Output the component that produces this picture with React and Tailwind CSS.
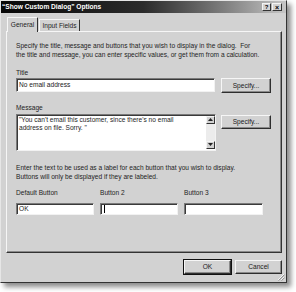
import React from "react";

function Btn({ children, w = "w-[50px]", h = "h-[15px]", def = false, extra = "" }) {
  return (
    <div
      className={`${w} ${h} ${extra} flex items-center justify-center bg-[#d2d2d2] ${
        def ? "outline outline-1 outline-[#111]" : ""
      } border border-t-[#f6f6f6] border-l-[#f6f6f6] border-r-[#2e2e2e] border-b-[#2e2e2e] shadow-[inset_-1px_-1px_0_#8a8a8a] text-[#1a1a1a]`}
    >
      {children}
    </div>
  );
}

function Field({ w, h, children, extra = "" }) {
  return (
    <div
      className={`${w} ${h} ${extra} bg-white border border-t-[#7a7a7a] border-l-[#7a7a7a] border-r-[#f2f2f2] border-b-[#f2f2f2] shadow-[inset_1px_1px_0_#3a3a3a] flex items-center pl-[2px] text-[#1a1a1a]`}
    >
      {children}
    </div>
  );
}

export default function App() {
  return (
    <div className="w-[296px] h-[292px] bg-white overflow-hidden font-['Liberation_Sans',Arial,sans-serif] text-[6.6px] text-[#1e1e1e]">
      <div className="relative w-[287px] h-[283px] bg-[#d2d2d2] border border-t-[#e6e6e6] border-l-[#e6e6e6] border-r-[#333] border-b-[#333] shadow-[4px_4px_5px_rgba(0,0,0,0.45)] flex flex-col">
        {/* title bar */}
        <div className="h-[12px] flex items-center justify-between bg-linear-to-r from-[#080808] via-[#2c2c2c] to-[#c6c6c6] pl-[1px] pr-[4px]">
          <span className="text-white font-bold leading-none">“Show Custom Dialog” Options</span>
          <div className="flex">
            <div className="w-[9px] h-[8px] bg-[#d2d2d2] border border-t-[#f4f4f4] border-l-[#f4f4f4] border-r-[#333] border-b-[#333] flex items-center justify-center text-[6px] font-bold leading-none text-black">?</div>
            <div className="w-[10px] h-[8px] ml-px bg-[#d2d2d2] border border-t-[#f4f4f4] border-l-[#f4f4f4] border-r-[#333] border-b-[#333] flex items-center justify-center text-[7px] font-bold leading-none text-black">×</div>
          </div>
        </div>

        {/* tabs */}
        <div className="mt-[4px] ml-[6px] h-[14px] flex items-end relative z-10">
          <div className="w-[31px] h-[14px] bg-[#d2d2d2] border border-b-0 border-t-[#f6f6f6] border-l-[#f6f6f6] border-r-[#333] rounded-t-[1px] flex items-center justify-center pb-[1px] mb-[-1px] h-[15px]">
            General
          </div>
          <div className="w-[41px] h-[12px] ml-[1px] bg-[#d2d2d2] border border-b-0 border-t-[#f6f6f6] border-l-[#f6f6f6] border-r-[#333] flex items-center justify-center">
            Input Fields
          </div>
        </div>

        {/* panel */}
        <div className="ml-[5px] w-[276px] h-[222px] border border-t-[#f6f6f6] border-l-[#f6f6f6] border-r-[#333] border-b-[#333] shadow-[inset_-1px_-1px_0_#8a8a8a] pl-[9px] pt-[9px] flex flex-col">
          <p className="leading-[9px]">
            Specify the title, message and buttons that you wish to display in the dialog.&nbsp; For
            <br />
            the title and message, you can enter specific values, or get them from a calculation.
          </p>

          <div className="mt-[8.5px] leading-[9px]">Title</div>
          <div className="mt-[1.5px] flex items-start">
            <Field w="w-[199px]" h="h-[14px]">No email address</Field>
            <Btn extra="ml-[6px]">Specify...</Btn>
          </div>

          <div className="mt-[10px] leading-[9px]">Message</div>
          <div className="mt-[1.5px] flex items-start">
            <div className="w-[200px] h-[37px] bg-white border border-t-[#7a7a7a] border-l-[#7a7a7a] border-r-[#f2f2f2] border-b-[#f2f2f2] shadow-[inset_1px_1px_0_#3a3a3a] flex">
              <div className="flex-1 pl-[2px] pt-[1px] leading-[8.5px]">
                "You can't email this customer, since there's no email
                <br />
                address on file. Sorry. "
              </div>
              <div className="w-[9px] mt-px mb-px bg-[#ececec] flex flex-col justify-between">
                <div className="h-[8px] bg-[#d2d2d2] border border-t-[#f4f4f4] border-l-[#f4f4f4] border-r-[#333] border-b-[#333] flex items-center justify-center">
                  <svg width="5" height="3" viewBox="0 0 5 3"><path d="M2.5 0 L5 3 L0 3 Z" fill="#222" /></svg>
                </div>
                <div className="h-[8px] bg-[#d2d2d2] border border-t-[#f4f4f4] border-l-[#f4f4f4] border-r-[#333] border-b-[#333] flex items-center justify-center">
                  <svg width="5" height="3" viewBox="0 0 5 3"><path d="M0 0 L5 0 L2.5 3 Z" fill="#222" /></svg>
                </div>
              </div>
            </div>
            <Btn extra="ml-[5px] mt-[1px]" h="h-[14px]">Specify...</Btn>
          </div>

          <p className="mt-[12.5px] leading-[9px]">
            Enter the text to be used as a label for each button that you wish to display.
            <br />
            Buttons will only be displayed if they are labeled.
          </p>

          <div className="mt-[7px] flex leading-[9px]">
            <div className="w-[84px]">Default Button</div>
            <div className="w-[84px]">Button 2</div>
            <div className="w-[84px]">Button 3</div>
          </div>
          <div className="mt-[5.5px] flex">
            <div className="w-[84px]">
              <Field w="w-[78px]" h="h-[12px]">OK</Field>
            </div>
            <div className="w-[84px]">
              <Field w="w-[78px]" h="h-[12px]" extra="pl-[3px]">
                <div className="w-px h-[8px] bg-black" />
              </Field>
            </div>
            <div className="w-[84px]">
              <Field w="w-[79px]" h="h-[12px]" />
            </div>
          </div>
        </div>

        {/* bottom buttons */}
        <div className="mt-[7px] pr-[4px] flex justify-end gap-[4px]">
          <Btn w="w-[47px]" h="h-[14px]" def>OK</Btn>
          <Btn w="w-[47px]" h="h-[14px]">Cancel</Btn>
        </div>

        {/* size grip */}
        <svg className="absolute right-[1px] bottom-[1px]" width="8" height="8" viewBox="0 0 8 8">
          <path d="M7 1 L1 7 M7 4 L4 7 M7 6.5 L6.5 7" stroke="#fff" strokeWidth="0.8" />
          <path d="M7.6 1.6 L1.6 7.6 M7.6 4.6 L4.6 7.6" stroke="#777" strokeWidth="0.8" />
        </svg>
      </div>
    </div>
  );
}
